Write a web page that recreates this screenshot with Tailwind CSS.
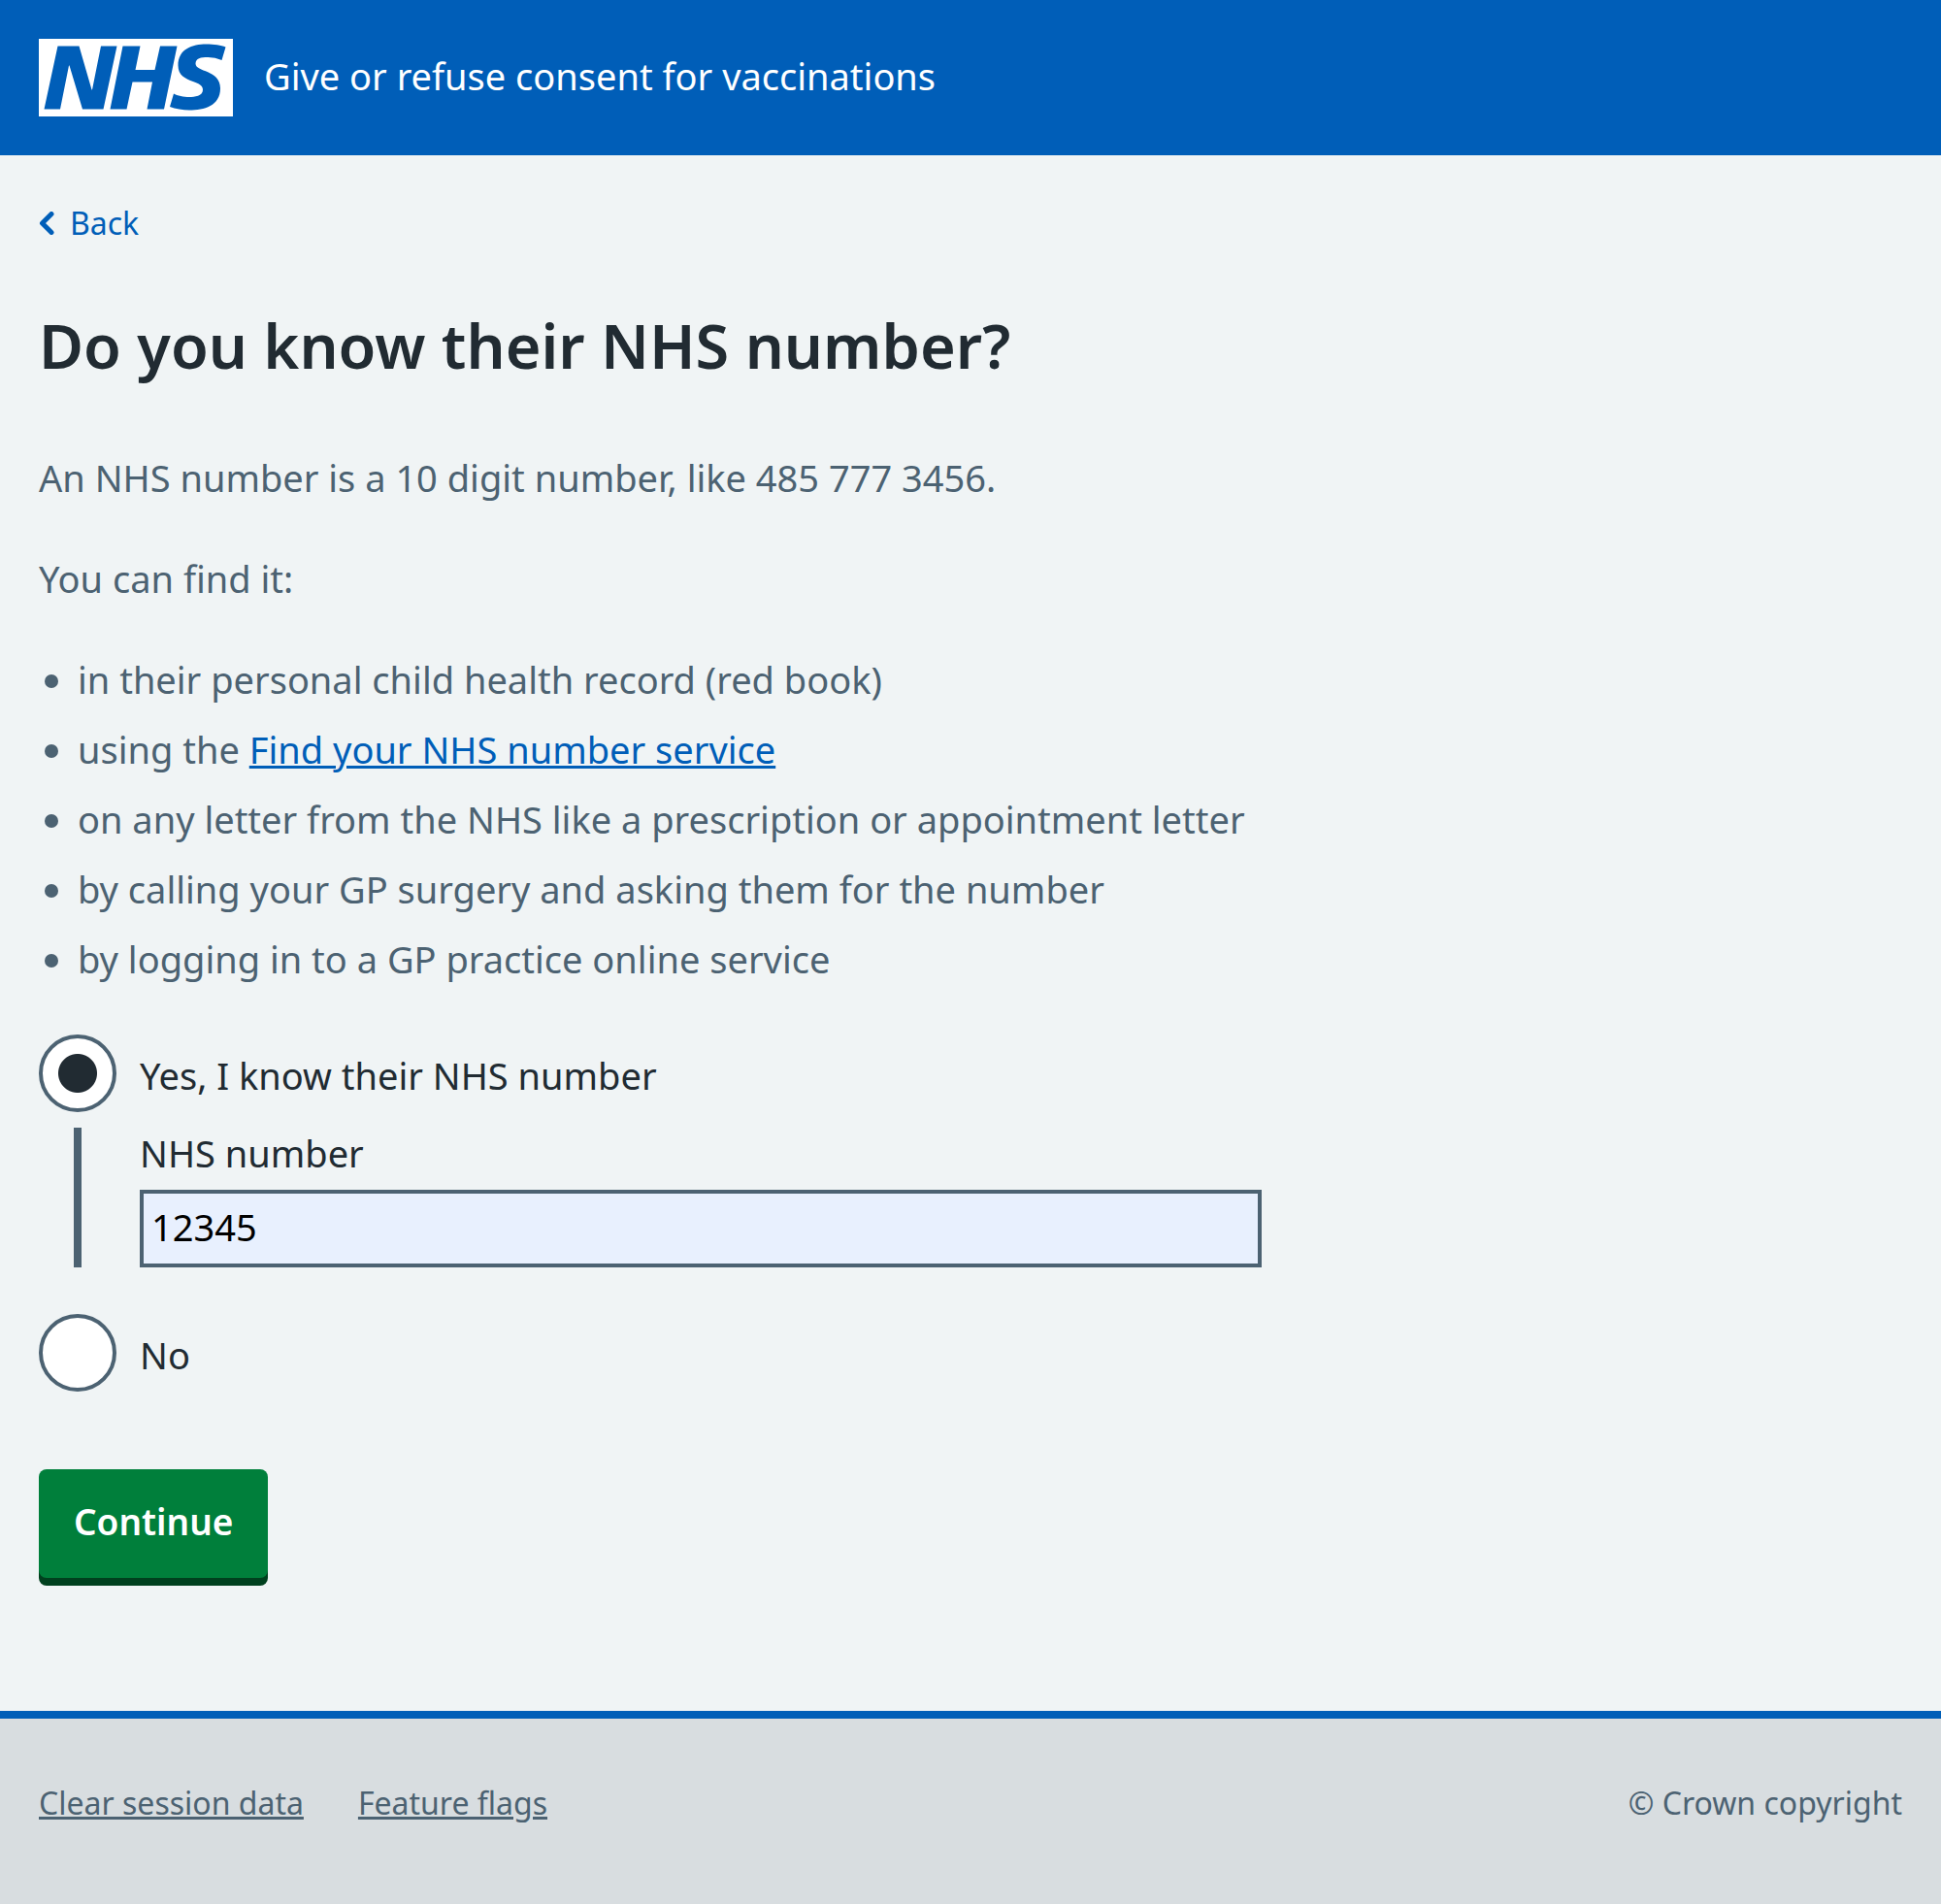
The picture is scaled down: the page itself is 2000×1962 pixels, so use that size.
<!DOCTYPE html>
<html lang="en">
<head>
<meta charset="utf-8">
<meta name="viewport" content="width=device-width, initial-scale=1">
<title>Do you know their NHS number?</title>
<script src="https://cdn.jsdelivr.net/npm/@tailwindcss/browser@4"></script>
</head>
<body class="flex min-h-screen flex-col bg-[#f0f4f5] font-['Noto_Sans',sans-serif] text-[38px] leading-[56px] text-[#212b32]">
  <header class="flex items-center gap-8 bg-[#005eb8] p-10 text-white">
    <svg class="h-20 w-[200px] shrink-0" viewBox="0 0 200 80" role="img" aria-label="NHS">
      <path fill="#fff" d="M200 0v80H0V0h200Zm-27.5 5.5c-14.5 0-29 5-29 22 0 10.2 7.7 13.5 14.7 16.3l.7.3c5.4 2 10.1 3.9 10.1 8.4 0 6.5-8.5 7.5-14 7.5s-12.5-1.5-16-3.5L135 70c5.5 2 13.5 3.5 20 3.5 15.5 0 32-4.5 32-22.5 0-19.5-25.5-16.5-25.5-25.5 0-5.5 5.5-6.5 12.5-6.5a35 35 0 0 1 14.5 3l4-13.5c-4.5-2-12-3-20-3Zm-131 2h-22l-14 65H22l9-45h.5l13.5 45h21.5l14-65H64l-9 45h-.5l-13-45Zm63 0h-18l-13 65h17l6-28H117l-5.5 28H129l13.5-65H125L119.5 32h-20l5-24.5Z"/>
    </svg>
    <a href="#" class="pb-1">Give or refuse consent for vaccinations</a>
  </header>

  <main class="grow px-10 pt-[46px] pb-[136px]">
    <a href="#" class="flex w-fit items-center gap-4 text-[32px] leading-[48px] text-[#005eb8]">
      <svg class="h-6 w-4" viewBox="0 0 16 24" fill="none" stroke="currentColor" stroke-width="5" stroke-linecap="round" stroke-linejoin="round" aria-hidden="true"><path d="M13 2.5 3.5 12l9.5 9.5"/></svg>
      Back
    </a>

    <form class="mt-[66px] w-2/3 pr-5">
      <fieldset>
        <legend class="text-[63px] leading-[72px] font-semibold"><h1>Do you know their NHS number?</h1></legend>
        <div class="mt-[72px] flex flex-col gap-12 text-[#4c6272]">
          <p>An NHS number is a 10 digit number, like 485 777 3456.</p>
          <p>You can find it:</p>
          <ul class="flex list-disc flex-col gap-4 pl-10">
            <li>in their personal child health record (red book)</li>
            <li>using the <a href="#" class="text-[#005eb8] underline decoration-3 underline-offset-2">Find your NHS number service</a></li>
            <li>on any letter from the NHS like a prescription or appointment letter</li>
            <li>by calling your GP surgery and asking them for the number</li>
            <li>by logging in to a GP practice online service</li>
          </ul>
        </div>

        <div class="mt-[50px] flex items-center gap-6">
          <input type="radio" id="known-yes" name="known" checked class="size-20 shrink-0 appearance-none rounded-full border-4 border-[#4c6272] bg-white bg-[radial-gradient(circle,#212b32_19.5px,transparent_20.5px)]">
          <label for="known-yes" class="pt-1">Yes, I know their NHS number</label>
        </div>
        <div class="mt-4 ml-9 border-l-8 border-[#4c6272] pl-[60px]">
          <label for="nhs-number" class="block pb-3 leading-[52px]">NHS number</label>
          <input type="text" id="nhs-number" value="12345" inputmode="numeric" class="block h-20 w-full border-4 border-[#4c6272] bg-[#e8f0fe] px-2 pb-1 text-black">
        </div>
        <div class="mt-12 flex items-center gap-6">
          <input type="radio" id="known-no" name="known" class="size-20 shrink-0 appearance-none rounded-full border-4 border-[#4c6272] bg-white">
          <label for="known-no" class="pt-1">No</label>
        </div>
      </fieldset>
      <button type="submit" class="mt-20 block rounded-lg bg-[#007f3b] px-9 pt-[26px] pb-[30px] text-[37px] leading-[56px] font-semibold text-white shadow-[0_8px_0_#00401e]">Continue</button>
    </form>
  </main>

  <footer class="flex items-center justify-between border-t-8 border-[#005eb8] bg-[#d8dde0] px-10 pt-[63px] pb-20 text-[32px] leading-[48px] text-[#4c6272]">
    <nav class="flex gap-14">
      <a href="#" class="underline decoration-3 underline-offset-2">Clear session data</a>
      <a href="#" class="underline decoration-3 underline-offset-2">Feature flags</a>
    </nav>
    <p>© Crown copyright</p>
  </footer>
</body>
</html>
